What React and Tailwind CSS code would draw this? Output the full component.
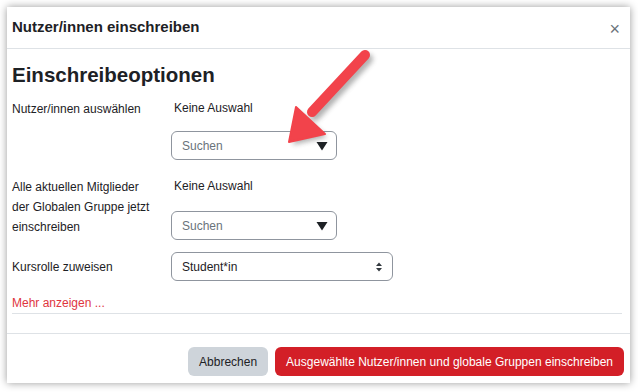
import React from 'react';

const font = { fontFamily: '"Liberation Sans", Arial, sans-serif' };

const Caret = () => (
    <svg width="12" height="10" viewBox="0 0 12 10">
        <path d="M0.5 1 L11.5 1 L6 9.5 Z" fill="#1d2125" />
    </svg>
);

const SearchSelect = () => (
    <div className="w-[166px] h-[29px] border border-[#8f959e] rounded-[6px] flex items-center justify-between pl-[10px] pr-[8px] text-[12px] text-[#6a737b]">
        <span>Suchen</span>
        <Caret />
    </div>
);

const Arrow = () => (
    <svg className="absolute left-0 top-0 pointer-events-none" width="638" height="392">
        <defs>
            <filter id="sh" x="-20%" y="-20%" width="140%" height="140%">
                <feGaussianBlur stdDeviation="2.5" />
            </filter>
        </defs>
        <g transform="translate(3,4)" filter="url(#sh)" opacity="0.45">
            <line x1="365" y1="55" x2="312" y2="112" stroke="#555" strokeWidth="10" strokeLinecap="round" />
            <path d="M290 141 L297 108 L324 133 Z" fill="#555" />
        </g>
        <line x1="365" y1="55" x2="312" y2="112" stroke="#f2434b" strokeWidth="10" strokeLinecap="round" />
        <path d="M289 142 L296 107 L325 134 Z" fill="#f2434b" stroke="#f2434b" strokeWidth="2" strokeLinejoin="round" />
    </svg>
);

export default function App() {
    return (
        <div className="relative w-[638px] h-[392px] bg-white overflow-hidden" style={font}>
            <div className="absolute left-[7px] top-[7px] w-[623px] h-[376px] bg-white shadow-[0_0_8px_rgba(0,0,0,0.4)] flex flex-col text-[#1d2125]">
                <div className="h-[42px] border-b border-[#dee2e6] flex items-center justify-between pl-[5px] pr-[10px]">
                    <h5 className="text-[15px] font-bold">Nutzer/innen einschreiben</h5>
                    <span className="text-[18px] text-[#6a737b] leading-none mt-[2px]">×</span>
                </div>
                <div className="flex-1 px-[5px]">
                    <h3 className="mt-[13px] h-[26px] leading-[26px] text-[20.5px] font-bold">Einschreibeoptionen</h3>
                    <div className="mt-[11px] flex text-[12px]">
                        <div className="w-[159px] leading-[20px]">Nutzer/innen auswählen</div>
                        <div className="flex flex-col">
                            <div className="leading-[20px] pl-[3px] -mt-[1px]">Keine Auswahl</div>
                            <div className="mt-[13px]"><SearchSelect /></div>
                        </div>
                    </div>
                    <div className="mt-[17px] flex text-[12px]">
                        <div className="w-[159px] leading-[20px]">
                            Alle aktuellen Mitglieder<br />der Globalen Gruppe jetzt<br />einschreiben
                        </div>
                        <div className="flex flex-col">
                            <div className="leading-[20px] pl-[3px] -mt-[1px]">Keine Auswahl</div>
                            <div className="mt-[15px]"><SearchSelect /></div>
                        </div>
                    </div>
                    <div className="mt-[12px] flex items-center text-[12px]">
                        <div className="w-[159px] leading-[20px]">Kursrolle zuweisen</div>
                        <div className="w-[222px] h-[29px] border border-[#8f959e] rounded-[6px] flex items-center justify-between pl-[10px] pr-[10px]">
                            <span>Student*in</span>
                            <svg width="6" height="10" viewBox="0 0 6 10">
                                <path d="M0 4 L3 0.5 L6 4 Z M0 6 L3 9.5 L6 6 Z" fill="#343a40" />
                            </svg>
                        </div>
                    </div>
                    <div className="mt-[12px] h-[20px] leading-[20px] text-[12px] text-[#e0353e] border-b border-[#dee2e6] box-content mr-[3px]">Mehr anzeigen ...</div>
                </div>
                <div className="h-[50px] border-t border-[#dee2e6] flex items-start justify-end gap-[7px] pt-[13px] pr-[6px]">
                    <button className="h-[29px] px-[11px] rounded-[6px] bg-[#ced4da] text-[12px] text-[#1d2125]">Abbrechen</button>
                    <button className="h-[29px] px-[11px] rounded-[6px] bg-[#d31f27] text-[12px] text-white">Ausgewählte Nutzer/innen und globale Gruppen einschreiben</button>
                </div>
            </div>
            <Arrow />
        </div>
    );
}
